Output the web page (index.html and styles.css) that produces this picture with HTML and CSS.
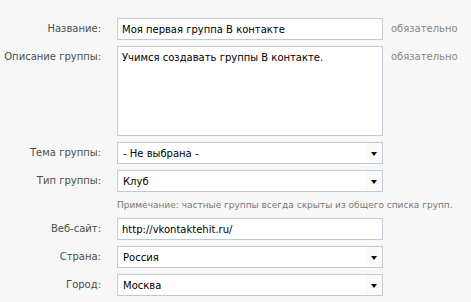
FILE: index.html
```html
<!DOCTYPE html>
<html lang="ru">
<head>
    <meta charset="UTF-8">
    <title>Создание группы</title>
    <link rel="stylesheet" href="styles.css">
</head>
<body>
    <form class="group-form">
        <label class="label" for="name">Название:</label>
        <input class="field" id="name" type="text" value="Моя первая группа В контакте">
        <div class="hint">обязательно</div>

        <label class="label" for="desc">Описание группы:</label>
        <textarea class="field area" id="desc">Учимся создавать группы В контакте.</textarea>
        <div class="hint">обязательно</div>

        <label class="label" for="theme">Тема группы:</label>
        <div class="select-wrap">
            <select class="field select" id="theme"><option>- Не выбрана -</option></select>
            <span class="arrow"></span>
        </div>
        <div></div>

        <label class="label" for="type">Тип группы:</label>
        <div class="select-wrap">
            <select class="field select" id="type"><option>Клуб</option></select>
            <span class="arrow"></span>
        </div>
        <div></div>

        <div></div>
        <div class="note">Примечание: частные группы всегда скрыты из общего списка групп.</div>

        <label class="label" for="site">Веб-сайт:</label>
        <input class="field" id="site" type="text" value="http://vkontaktehit.ru/">
        <div></div>

        <label class="label" for="country">Страна:</label>
        <div class="select-wrap">
            <select class="field select" id="country"><option>Россия</option></select>
            <span class="arrow"></span>
        </div>
        <div></div>

        <label class="label" for="city">Город:</label>
        <div class="select-wrap">
            <select class="field select" id="city"><option>Москва</option></select>
            <span class="arrow"></span>
        </div>
        <div></div>
    </form>
</body>
</html>
```

FILE: styles.css
```css
body {
    margin: 0;
    background: #f7f7f7;
    font-family: 'DejaVu Sans', Tahoma, sans-serif;
    font-size: 10px;
    color: #000;
}

.group-form {
    display: grid;
    grid-template-columns: 117px 266px minmax(0, 1fr);
    row-gap: 6px;
    padding-top: 18px;
}

.label {
    text-align: right;
    padding-right: 16px;
    line-height: 22px;
    color: #4d4d4d;
    white-space: nowrap;
}

.hint {
    padding-left: 8px;
    line-height: 22px;
    color: #888;
}

.field {
    box-sizing: border-box;
    width: 266px;
    height: 22px;
    margin: 0;
    padding: 0 4px;
    border: 1px solid #c0cad5;
    background: #fff;
    font-family: inherit;
    font-size: 10px;
    color: #000;
    outline: none;
}

.area {
    height: 90px;
    padding: 5px 4px;
    resize: none;
    line-height: 12px;
}

.select-wrap {
    position: relative;
}

.select {
    appearance: none;
    padding-left: 5px;
}

.arrow {
    position: absolute;
    top: 1px;
    right: 1px;
    width: 16px;
    height: 20px;
    background: #fafafa;
}

.arrow::after {
    content: '';
    position: absolute;
    left: 5px;
    top: 9px;
    border-left: 3.5px solid transparent;
    border-right: 3.5px solid transparent;
    border-top: 4px solid #000;
}

.note {
    grid-column: 2 / 4;
    min-width: 0;
    font-size: 9px;
    line-height: 13px;
    color: #777;
    white-space: nowrap;
    padding-top: 1px;
}
```
